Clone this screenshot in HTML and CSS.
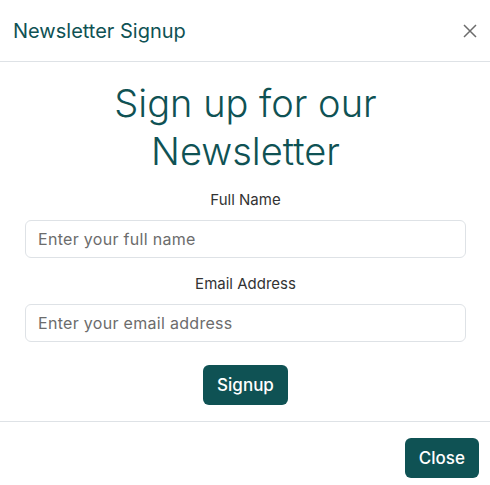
FILE: index.html
```html
<!DOCTYPE html>
<html lang="en">
<head>
<meta charset="utf-8">
<title>Newsletter Signup</title>
<link rel="stylesheet" href="styles.css">
</head>
<body>
<div class="modal">
  <div class="modal-header">
    <h5 class="modal-title">Newsletter Signup</h5>
    <button class="btn-x" aria-label="Close">
      <svg width="14" height="14" viewBox="0 0 14 14"><path d="M1 1L13 13M13 1L1 13" stroke="#6c6c6c" stroke-width="1.5" fill="none"/></svg>
    </button>
  </div>
  <div class="modal-body">
    <h1 class="headline">Sign up for our Newsletter</h1>
    <form class="form">
      <label class="field">
        <span class="label">Full Name</span>
        <input class="input" type="text" placeholder="Enter your full name">
      </label>
      <label class="field">
        <span class="label">Email Address</span>
        <input class="input" type="email" placeholder="Enter your email address">
      </label>
      <div class="actions"><button type="button" class="btn">Signup</button></div>
    </form>
  </div>
  <div class="modal-footer">
    <button class="btn">Close</button>
  </div>
</div>
</body>
</html>
```
FILE: styles.css
```css
* { box-sizing: border-box; }
body {
  margin: 0;
  font-family: Inter, "Noto Sans", sans-serif;
  color: #333;
  background: #fff;
}
.modal { width: 490px; }
.modal-header {
  display: flex;
  align-items: center;
  justify-content: space-between;
  height: 62px;
  padding: 0 12px 0 13px;
  border-bottom: 1px solid #dee2e6;
}
.modal-title {
  margin: 0;
  font-size: 20px;
  font-weight: 400;
  color: #0f5254;
}
.btn-x {
  border: 0;
  background: none;
  padding: 0;
  width: 16px;
  height: 16px;
  display: flex;
  align-items: center;
  justify-content: center;
  margin-top: 1px;
}
.modal-body { padding: 17px 24px 16px 25px; }
.headline {
  margin: 0 0 15px;
  text-align: center;
  font-size: 38px;
  font-weight: 300;
  line-height: 48px;
  color: #0f5254;
}
.form { display: flex; flex-direction: column; }
.field { display: flex; flex-direction: column; align-items: center; margin-bottom: 16px; }
.label { font-size: 15px; line-height: 20px; margin-bottom: 10px; color: #333; }
.input {
  width: 100%;
  height: 38px;
  border: 1px solid #dee2e6;
  border-radius: 6px;
  padding: 0 12px;
  font-family: inherit;
  font-size: 16px;
  letter-spacing: 0.3px;
  color: #333;
}
.input::placeholder { color: #6c6c6c; }
.actions { display: flex; justify-content: center; margin-top: 7px; }
.btn {
  background: #0f5254;
  color: #fff;
  border: 0;
  border-radius: 6px;
  height: 40px;
  padding: 0 14px;
  font-family: inherit;
  font-size: 17px;
  font-weight: 500;
}
.modal-footer {
  display: flex;
  justify-content: flex-end;
  padding: 16px 11px 8px;
  border-top: 1px solid #dee2e6;
}
```
